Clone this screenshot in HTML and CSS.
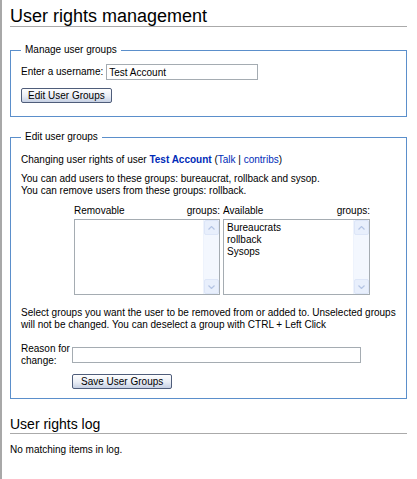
FILE: index.html
```html
<!DOCTYPE html>
<html>
    <head>
        <meta charset="utf-8">
        <title>User rights management</title>
        <link rel="stylesheet" href="styles.css">
    </head>
    <body>
        <div class="page">
            <h1 class="title">User rights management</h1>

            <fieldset class="box box--lookup">
                <legend>Manage user groups</legend>
                <div class="lookup-row">
                    <label for="username">Enter a username:</label>
                    <input id="username" class="text-input text-input--user" type="text" value="Test Account">
                </div>
                <button type="button" class="btn">Edit User Groups</button>
            </fieldset>

            <fieldset class="box box--edit">
                <legend>Edit user groups</legend>
                <p class="line">Changing user rights of user <a class="user-link" href="#">Test Account</a> (<a href="#">Talk</a> | <a href="#">contribs</a>)</p>
                <p class="line line--add">You can add users to these groups: bureaucrat, rollback and sysop.<br>You can remove users from these groups: rollback.</p>

                <div class="groups">
                    <div class="groups__col">
                        <div class="groups__head"><span>Removable</span><span>groups:</span></div>
                        <div class="listbox">
                            <div class="listbox__items"></div>
                            <div class="scrollbar">
                                <div class="scrollbar__btn">
                                    <svg width="7" height="4" viewBox="0 0 7 4"><path d="M0.5 3.5 L3.5 0.5 L6.5 3.5" fill="none" stroke="#b4c4e4" stroke-width="1.2"/></svg>
                                </div>
                                <div class="scrollbar__track"></div>
                                <div class="scrollbar__btn">
                                    <svg width="7" height="4" viewBox="0 0 7 4"><path d="M0.5 0.5 L3.5 3.5 L6.5 0.5" fill="none" stroke="#b4c4e4" stroke-width="1.2"/></svg>
                                </div>
                            </div>
                        </div>
                    </div>
                    <div class="groups__col">
                        <div class="groups__head"><span>Available</span><span>groups:</span></div>
                        <div class="listbox">
                            <div class="listbox__items">
                                <div>Bureaucrats</div>
                                <div>rollback</div>
                                <div>Sysops</div>
                            </div>
                            <div class="scrollbar">
                                <div class="scrollbar__btn">
                                    <svg width="7" height="4" viewBox="0 0 7 4"><path d="M0.5 3.5 L3.5 0.5 L6.5 3.5" fill="none" stroke="#b4c4e4" stroke-width="1.2"/></svg>
                                </div>
                                <div class="scrollbar__track"></div>
                                <div class="scrollbar__btn">
                                    <svg width="7" height="4" viewBox="0 0 7 4"><path d="M0.5 0.5 L3.5 3.5 L6.5 0.5" fill="none" stroke="#b4c4e4" stroke-width="1.2"/></svg>
                                </div>
                            </div>
                        </div>
                    </div>
                </div>

                <p class="line line--hint">Select groups you want the user to be removed from or added to. Unselected groups will not be changed. You can deselect a group with CTRL + Left Click</p>

                <div class="reason">
                    <label for="reason">Reason for change:</label>
                    <div class="reason__field">
                        <input id="reason" class="text-input text-input--reason" type="text">
                        <button type="button" class="btn btn--save">Save User Groups</button>
                    </div>
                </div>
            </fieldset>

            <h2 class="subtitle">User rights log</h2>
            <p class="empty">No matching items in log.</p>
        </div>
    </body>
</html>
```

FILE: styles.css
```css
body {
    margin: 0;
    background-color: #fff;
    color: #000;
    font-family: "Liberation Sans", Arial, sans-serif;
    font-size: 10px;
    line-height: 12px;
}

a {
    color: #002bb8;
    text-decoration: none;
}

.page {
    min-height: 479px;
    box-sizing: border-box;
    border-left: 2px solid #a8a8a8;
    padding: 0 10px 1px 8px;
}

.title {
    margin: 0;
    padding-top: 7px;
    font-size: 18px;
    line-height: 19px;
    font-weight: normal;
    border-bottom: 1px solid #aaa;
}

.box {
    margin: 17px 0 0;
    padding: 0 10px;
    border: 1px solid #5b8fcb;
    min-width: 0;
}

.box legend {
    padding: 0 4px;
    margin-left: 0;
}

.box--lookup {
    padding-top: 8px;
    padding-bottom: 13px;
}

.lookup-row {
    display: flex;
    align-items: center;
    gap: 3px;
    margin-bottom: 8px;
}

.text-input {
    height: 16px;
    box-sizing: border-box;
    border: 1px solid #a5acb2;
    padding: 0 2px;
    font-family: "Liberation Sans", Arial, sans-serif;
    font-size: 10px;
    color: #000;
    outline: none;
}

.text-input--user {
    width: 152px;
}

.text-input--reason {
    width: 289px;
    display: block;
}

.btn {
    display: block;
    height: 15px;
    box-sizing: border-box;
    padding: 0 6px;
    border: 1px solid #4f5d7a;
    border-radius: 2px;
    background: linear-gradient(#fefefe, #e9edf5 55%, #c6d0e3);
    font-family: "Liberation Sans", Arial, sans-serif;
    font-size: 10px;
    line-height: 13px;
    color: #000;
}

.btn--save {
    margin-top: 11px;
    padding: 0 8px;
}

.box--edit {
    margin-top: 14px;
    padding-top: 11px;
    padding-bottom: 9px;
}

.line {
    margin: 0;
}

.user-link {
    font-weight: bold;
}

.line--add {
    margin-top: 7px;
}

.groups {
    display: grid;
    grid-template-columns: 146px 147px;
    column-gap: 3px;
    margin: 8px 0 0 53px;
}

.groups__head {
    display: flex;
    justify-content: space-between;
    margin-bottom: 2px;
}

.listbox {
    display: flex;
    height: 76px;
    box-sizing: border-box;
    border: 1px solid #a5acb2;
    font-size: 10px;
}

.listbox__items {
    flex: 1;
    padding: 2px 3px;
}

.scrollbar {
    width: 15px;
    display: flex;
    flex-direction: column;
    background-color: #f3f7fe;
    border-left: 1px solid #eef3fc;
}

.scrollbar__btn {
    height: 15px;
    box-sizing: border-box;
    display: flex;
    align-items: center;
    justify-content: center;
    border: 1px solid #dde6f8;
    border-radius: 2px;
    background-color: #e8effc;
}

.scrollbar__track {
    flex: 1;
}

.line--hint {
    margin-top: 12px;
}

.reason {
    display: flex;
    margin-top: 12px;
}

.reason label {
    flex: 0 0 50px;
    margin-right: 1px;
}

.reason__field {
    padding-top: 4px;
}

.subtitle {
    margin: 16px 0 0;
    font-size: 14px;
    line-height: 18px;
    font-weight: normal;
    border-bottom: 1px solid #aaa;
}

.empty {
    margin: 10px 0 0;
}
```
